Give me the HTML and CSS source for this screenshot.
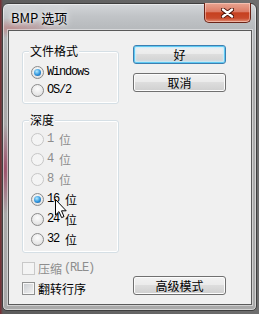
FILE: index.html
```html
<!DOCTYPE html>
<html lang="zh-CN">
<head>
  <meta charset="UTF-8">
  <title>BMP 选项</title>
  <link rel="stylesheet" href="styles.css">
</head>
<body>

<div class="window">
  <div class="titlebar">
    <span class="title">BMP 选项</span>
    <button class="close">
      <svg width="13" height="10" viewBox="0 0 13 10">
        <path d="M2 1.5 L11 8.5 M11 1.5 L2 8.5" stroke="#4a1208" stroke-width="4.2" stroke-linecap="round"/>
        <path d="M2 1.5 L11 8.5 M11 1.5 L2 8.5" stroke="#fff" stroke-width="2.4" stroke-linecap="round"/>
      </svg>
    </button>
  </div>

  <div class="client">
    <div class="left">
      <fieldset class="group fmt">
        <legend>文件格式</legend>
        <label class="opt"><span class="radio on"></span><span class="lat">Windows</span></label>
        <label class="opt"><span class="radio"></span><span class="lat">OS/2</span></label>
      </fieldset>

      <fieldset class="group depth">
        <legend>深度</legend>
        <label class="opt off"><span class="radio"></span><span class="lat">1 </span>位</label>
        <label class="opt off"><span class="radio"></span><span class="lat">4 </span>位</label>
        <label class="opt off"><span class="radio"></span><span class="lat">8 </span>位</label>
        <label class="opt"><span class="radio on"></span><span class="lat">16 </span>位</label>
        <label class="opt"><span class="radio"></span><span class="lat">24 </span>位</label>
        <label class="opt"><span class="radio"></span><span class="lat">32 </span>位</label>
      </fieldset>

      <div class="checks">
        <label class="chk off"><span class="box"></span>压缩<span class="lat">(RLE)</span></label>
        <label class="chk"><span class="box"></span>翻转行序</label>
      </div>
    </div>

    <div class="right">
      <button class="btn default">好</button>
      <button class="btn">取消</button>
      <button class="btn adv">高级模式</button>
    </div>
  </div>

  <!-- mouse pointer over the 16 位 option -->
  <svg class="cursor" width="13" height="20" viewBox="0 0 13 20">
    <path d="M0.5 0.5 L0.5 16 L4 12.6 L6.6 18.6 L9 17.6 L6.5 11.8 L11.2 11.8 Z" fill="#fff" stroke="#000" stroke-width="1"/>
  </svg>
</div>

</body>
</html>
```

FILE: styles.css
```css
body {
  margin: 0;
  background: linear-gradient(90deg, #7a2a30 0, #5c5c5c 3px, #6e6e6e);
  font-family: "Noto Sans CJK SC", sans-serif;
  font-size: 12px;
  color: #000;
}

.window {
  position: relative;
  margin: 3px 2px;
  width: 255px;
  height: 308px;
  box-sizing: border-box;
  border: 1px solid #3f3f3f;
  border-radius: 6px 6px 5px 5px;
  padding: 0 4px 5px 5px;
  display: flex;
  flex-direction: column;
  background:
    radial-gradient(ellipse 9px 45px at 2px 165px, rgba(150, 30, 70, .65), transparent),
    radial-gradient(ellipse 55px 10px at 8px 24px, rgba(190, 60, 60, .35), transparent),
    linear-gradient(#d4d7da, #c1c4c7 12px, #b5b8bb 27px, #ababab 80px, #a9a9a9);
  box-shadow: inset 0 0 0 1px rgba(255, 255, 255, .5);
}

.titlebar {
  height: 26px;
  display: flex;
  align-items: center;
  padding-left: 3px;
}

.title {
  font-size: 13px;
  line-height: 1;
  text-shadow: 0 0 4px #fff, 0 0 8px #fff;
}

.close {
  position: absolute;
  top: -1px;
  right: 5px;
  width: 47px;
  height: 20px;
  padding: 0;
  border: 1px solid #6b2418;
  border-top: none;
  border-radius: 0 0 5px 5px;
  display: flex;
  align-items: center;
  justify-content: center;
  background: linear-gradient(#e9a592, #dc7c66 45%, #c6401f 52%, #c94a2c 80%, #e39279);
  box-shadow: inset 0 0 0 1px rgba(255, 220, 210, .5);
}

/* client area */
.client {
  flex: 1;
  display: flex;
  background: #f0f0f0;
  border: 1px solid #5a5a5a;
  box-shadow: 0 0 0 1px rgba(255, 255, 255, .45);
}

.left {
  margin-left: 13px;
  padding-top: 12px;
  width: 97px;
}

.right {
  margin-left: 14px;
  width: 93px;
  padding-top: 14px;
  padding-bottom: 9px;
  display: flex;
  flex-direction: column;
}

/* group boxes */
.group {
  margin: 0;
  min-width: 0;
  box-sizing: border-box;
  width: 97px;
  padding: 4px 0 4px 8px;
  border: 1px solid #d5dfe5;
  border-radius: 3px;
  box-shadow: inset 0 0 0 1px #fff;
}

.group legend {
  padding: 0 1px;
  margin-left: -2px;
  line-height: 16px;
  background: #f0f0f0;
}

.depth {
  margin-top: 8px;
  padding-top: 1px;
  padding-bottom: 3px;
}

.opt {
  display: flex;
  align-items: center;
  height: 18px;
}

.depth .opt {
  height: 20px;
}

.opt.off, .chk.off {
  color: #8d8d8d;
}

.radio {
  position: relative;
  flex: none;
  width: 13px;
  height: 13px;
  box-sizing: border-box;
  margin-right: 3px;
  border: 1px solid #8a8a8a;
  border-radius: 50%;
  background: radial-gradient(circle at 50% 35%, #fdfdfd, #e6e6e6 65%, #d2d2d2);
}

.radio.on::after {
  content: "";
  position: absolute;
  left: 2px;
  top: 2px;
  width: 7px;
  height: 7px;
  border-radius: 50%;
  background: radial-gradient(circle at 40% 35%, #b4ebff, #2d93dc 55%, #1a4e8c);
}

.opt.off .radio {
  border-color: #c6c6c6;
  background: #f4f4f4;
}

.lat {
  font-family: "Liberation Mono", monospace;
  font-size: 12px;
  letter-spacing: -1.2px;
  white-space: pre;
}

/* check boxes */
.checks {
  margin-top: 5px;
}

.chk {
  display: flex;
  align-items: center;
  height: 20px;
}

.box {
  flex: none;
  width: 13px;
  height: 13px;
  box-sizing: border-box;
  margin-right: 3px;
  border: 1px solid #8e8f8f;
  background: linear-gradient(135deg, #c8cbcf, #f4f4f4);
  box-shadow: inset 0 0 0 1px #f7f7f7;
}

.chk.off .box {
  border-color: #c9c9c9;
  background: #f4f4f4;
  box-shadow: none;
}

.chk.off .lat {
  margin-left: 2px;
}

/* push buttons */
.btn {
  height: 19px;
  padding: 0;
  font-family: "Noto Sans CJK SC", sans-serif;
  font-size: 12px;
  line-height: 17px;
  color: #000;
  border: 1px solid #707070;
  border-radius: 3px;
  background: linear-gradient(#f2f2f2, #ebebeb 45%, #dddddd 50%, #cfcfcf);
  box-shadow: inset 0 0 0 1px #fcfcfc;
}

.btn + .btn {
  margin-top: 9px;
}

.btn.default {
  border-color: #3c7fb1;
  box-shadow: inset 0 0 0 1px #5fcaf3, inset 0 0 2px 2px #c9ecfb;
}

.btn.adv {
  margin-top: auto;
}

.cursor {
  position: absolute;
  left: 52px;
  top: 195px;
}
```
